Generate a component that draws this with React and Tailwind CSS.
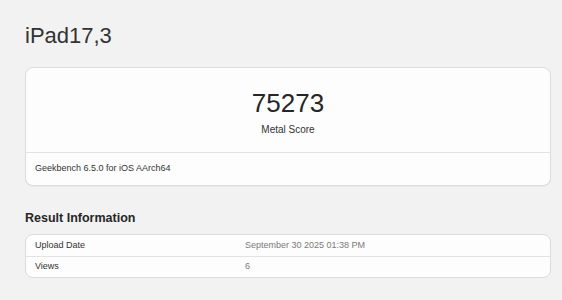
export default function App() {
  return (
    <div
      className="w-full h-[300px] bg-[#f2f2f2] pl-[25px] pr-[11px] pt-[23px] overflow-hidden"
      style={{ fontFamily: '"Liberation Sans", Arial, sans-serif' }}
    >
      <h1 className="text-[22px] leading-[26px] text-[#333333] font-normal">iPad17,3</h1>

      <div className="mt-[18px] bg-[#fdfdfd] border border-[#dcdcdc] rounded-[8px] shadow-[0_1px_1px_rgba(0,0,0,0.04)]">
        <div className="flex flex-col items-center pt-[20px] pb-[16px] border-b border-[#e3e3e3]">
          <div className="text-[26px] leading-[30px] text-[#262626]">75273</div>
          <div className="mt-[6px] text-[10px] leading-[12px] text-[#333333]">Metal Score</div>
        </div>
        <div className="h-[32px] flex items-center px-[9px] text-[9px] text-[#333333]">
          Geekbench 6.5.0 for iOS AArch64
        </div>
      </div>

      <h2 className="mt-[24px] text-[12.5px] leading-[16px] font-bold text-[#262626]">Result Information</h2>

      <div className="mt-[8px] bg-[#fdfdfd] border border-[#dcdcdc] rounded-[8px] text-[9px]">
        <div className="grid grid-cols-[210px_1fr] h-[21px] items-center px-[9px]">
          <div className="text-[#333333]">Upload Date</div>
          <div className="text-[#7a7a7a]">September 30 2025 01:38 PM</div>
        </div>
        <div className="grid grid-cols-[210px_1fr] h-[21px] items-center px-[9px] border-t border-[#e3e3e3]">
          <div className="text-[#333333]">Views</div>
          <div className="text-[#7a7a7a]">6</div>
        </div>
      </div>
    </div>
  );
}
